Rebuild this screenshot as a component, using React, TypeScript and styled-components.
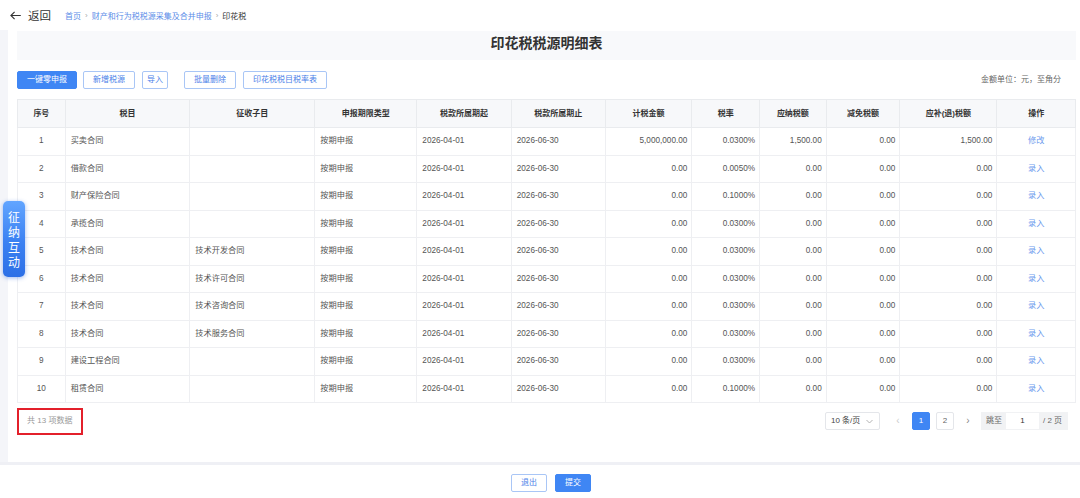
import React from "react";
import styled, { createGlobalStyle } from "styled-components";

const GlobalStyle = createGlobalStyle`
  html, body { margin: 0; padding: 0; background: #fff; }
  body { font-family: "Liberation Sans", "Noto Sans CJK SC", sans-serif; color: #555; }
  * { box-sizing: border-box; }
`;

const Page = styled.div`
  width: 1080px;
  height: 498px;
  position: relative;
  overflow: hidden;
  display: flex;
  flex-direction: column;
`;

const TopBar = styled.div`
  height: 30px;
  display: flex;
  align-items: center;
  padding-left: 10px;
`;

const Back = styled.div`
  display: flex;
  align-items: center;
  gap: 7px;
  font-size: 11.5px;
  color: #333;
`;

const Crumbs = styled.div`
  margin-left: 14px;
  display: flex;
  align-items: center;
  gap: 4px;
  font-size: 8px;
  color: #5b8de8;
`;

const CrumbSep = styled.span`
  color: #aaa;
  font-size: 8px;
`;

const CrumbCurrent = styled.span`
  color: #333;
`;

const Body = styled.div`
  height: 432px;
  display: flex;
`;

const LeftStrip = styled.div`
  width: 9px;
  background: #f4f5f9;
`;

const Main = styled.div`
  flex: 1;
  padding: 1px 4px 0 9px;
  display: flex;
  flex-direction: column;
`;

const TitleBand = styled.div`
  height: 29px;
  background: #f8f9fb;
  display: flex;
  align-items: center;
  justify-content: center;
  font-size: 14px;
  font-weight: bold;
  color: #333;
  padding-bottom: 8px;
`;

const Toolbar = styled.div`
  margin-top: 11px;
  height: 18px;
  display: flex;
  align-items: center;
`;

const Btn = styled.button<{ $primary?: boolean; $gap?: number; $pad?: number }>`
  height: 18px;
  padding: 0 ${(p) => p.$pad ?? 9}px;
  margin-left: ${(p) => p.$gap ?? 0}px;
  font-family: inherit;
  font-size: 8px;
  border-radius: 2px;
  border: 1px solid ${(p) => (p.$primary ? "#3f86f4" : "#a9c6f6")};
  background: ${(p) => (p.$primary ? "#3f86f4" : "#fff")};
  color: ${(p) => (p.$primary ? "#fff" : "#4a80e8")};
  line-height: 16px;
  cursor: pointer;
`;

const Unit = styled.div`
  margin-left: auto;
  margin-right: 15px;
  font-size: 8px;
  line-height: 12px;
  color: #666;
`;

const Table = styled.table`
  margin-top: 10px;
  width: 1058px;
  border-collapse: collapse;
  table-layout: fixed;
  font-size: 8.2px;
  line-height: 12px;
  border: 1px solid #e6e8ec;
`;

const Th = styled.th`
  height: 28px;
  background: #f7f8fa;
  color: #333;
  font-weight: bold;
  font-size: 8px;
  border: 1px solid #e9ebee;
  text-align: center;
  padding: 0;
`;

const Td = styled.td<{ $align?: "left" | "right" | "center" }>`
  height: 27.5px;
  border: 1px solid #eeeff2;
  text-align: ${(p) => p.$align ?? "left"};
  padding: 0 ${(p) => (p.$align === "right" ? "4px" : "5px")};
  color: #555;
  white-space: nowrap;
`;

const Link = styled.span`
  color: #6f9cee;
`;

const FooterRow = styled.div`
  margin-top: 5px;
  height: 26px;
  display: flex;
  align-items: center;
`;

const Total = styled.div`
  width: 66px;
  height: 27px;
  border: 2px solid #e3202b;
  display: flex;
  align-items: center;
  padding-left: 8px;
  font-size: 8px;
  line-height: 12px;
  color: #999;
`;

const Pager = styled.div`
  margin-left: auto;
  margin-right: 8px;
  display: flex;
  align-items: center;
  font-size: 8px;
  line-height: 12px;
  color: #555;
`;

const SizeSelect = styled.div`
  width: 55px;
  height: 18px;
  border: 1px solid #e4e6ea;
  border-radius: 2px;
  display: flex;
  align-items: center;
  padding: 0 6px 0 5px;
  justify-content: space-between;
  margin-right: 8px;
  color: #444;
`;

const Arrow = styled.span<{ $dim?: boolean }>`
  width: 20px;
  text-align: center;
  color: ${(p) => (p.$dim ? "#ccc" : "#888")};
  font-size: 10px;
`;

const PageBtn = styled.div<{ $active?: boolean; $gap?: number }>`
  width: 18px;
  height: 18px;
  border-radius: 2px;
  margin-left: ${(p) => p.$gap ?? 0}px;
  display: flex;
  align-items: center;
  justify-content: center;
  border: 1px solid ${(p) => (p.$active ? "#3f86f4" : "#e4e6ea")};
  background: ${(p) => (p.$active ? "#3f86f4" : "#fff")};
  color: ${(p) => (p.$active ? "#fff" : "#666")};
`;

const NextArrow = styled(Arrow)`
  margin-left: 4px;
`;

const Jump = styled.div`
  margin-left: 3px;
  width: 87px;
  height: 18px;
  background: #f1f2f4;
  display: flex;
  align-items: center;
  padding: 0 3px 0 5px;
  gap: 4px;
  color: #666;
`;

const JumpInput = styled.div`
  width: 33px;
  height: 16px;
  background: #fff;
  display: flex;
  align-items: center;
  justify-content: center;
  color: #333;
`;

const Bottom = styled.div`
  flex: 1;
  border-top: 3px solid #eff0f5;
  display: flex;
  justify-content: center;
  align-items: flex-start;
  padding-top: 9px;
  gap: 8px;
  padding-left: 22px;
`;

const SideTab = styled.div`
  position: absolute;
  left: 3px;
  top: 201px;
  width: 22px;
  height: 76px;
  border-radius: 5px;
  background: linear-gradient(180deg, #62a5ff 0%, #3a80f2 55%, #2c6fe6 100%);
  box-shadow: 0 1px 4px rgba(40, 100, 220, 0.45);
  color: #fff;
  font-size: 12px;
  font-family: "Noto Sans CJK SC", sans-serif;
  display: flex;
  flex-direction: column;
  align-items: center;
  justify-content: center;
  line-height: 15px;
`;

type Row = {
  name: string;
  sub: string;
  amount: string;
  rate: string;
  due: string;
  op: string;
};

const rows: Row[] = [
  { name: "买卖合同", sub: "", amount: "5,000,000.00", rate: "0.0300%", due: "1,500.00", op: "修改" },
  { name: "借款合同", sub: "", amount: "0.00", rate: "0.0050%", due: "0.00", op: "录入" },
  { name: "财产保险合同", sub: "", amount: "0.00", rate: "0.1000%", due: "0.00", op: "录入" },
  { name: "承揽合同", sub: "", amount: "0.00", rate: "0.0300%", due: "0.00", op: "录入" },
  { name: "技术合同", sub: "技术开发合同", amount: "0.00", rate: "0.0300%", due: "0.00", op: "录入" },
  { name: "技术合同", sub: "技术许可合同", amount: "0.00", rate: "0.0300%", due: "0.00", op: "录入" },
  { name: "技术合同", sub: "技术咨询合同", amount: "0.00", rate: "0.0300%", due: "0.00", op: "录入" },
  { name: "技术合同", sub: "技术服务合同", amount: "0.00", rate: "0.0300%", due: "0.00", op: "录入" },
  { name: "建设工程合同", sub: "", amount: "0.00", rate: "0.0300%", due: "0.00", op: "录入" },
  { name: "租赁合同", sub: "", amount: "0.00", rate: "0.1000%", due: "0.00", op: "录入" },
];

const widths = [47.6, 124.7, 125, 102, 94.4, 94, 86.6, 67.7, 66.7, 73.6, 97, 78.7];
const heads = ["序号", "税目", "征收子目", "申报期限类型", "税款所属期起", "税款所属期止", "计税金额", "税率", "应纳税额", "减免税额", "应补(退)税额", "操作"];

export default function App() {
  return (
    <Page>
      <GlobalStyle />
      <TopBar>
        <Back>
          <svg width="11" height="9" viewBox="0 0 11 9" fill="none" stroke="#333" strokeWidth="1.1">
            <path d="M10.8 4.5H1M4.6 0.8L0.9 4.5l3.7 3.7" />
          </svg>
          <span>返回</span>
        </Back>
        <Crumbs>
          <span>首页</span>
          <CrumbSep>›</CrumbSep>
          <span>财产和行为税税源采集及合并申报</span>
          <CrumbSep>›</CrumbSep>
          <CrumbCurrent>印花税</CrumbCurrent>
        </Crumbs>
      </TopBar>
      <Body>
        <LeftStrip />
        <Main>
          <TitleBand>印花税税源明细表</TitleBand>
          <Toolbar>
            <Btn $primary>一键零申报</Btn>
            <Btn $gap={6}>新增税源</Btn>
            <Btn $gap={7} $pad={4}>导入</Btn>
            <Btn $gap={16}>批量删除</Btn>
            <Btn $gap={7}>印花税税目税率表</Btn>
            <Unit>金额单位：元，至角分</Unit>
          </Toolbar>
          <Table>
            <colgroup>
              {widths.map((w, i) => (
                <col key={i} style={{ width: w }} />
              ))}
            </colgroup>
            <thead>
              <tr>
                {heads.map((h) => (
                  <Th key={h}>{h}</Th>
                ))}
              </tr>
            </thead>
            <tbody>
              {rows.map((r, i) => (
                <tr key={i}>
                  <Td $align="center">{i + 1}</Td>
                  <Td>{r.name}</Td>
                  <Td>{r.sub}</Td>
                  <Td>按期申报</Td>
                  <Td>2026-04-01</Td>
                  <Td>2026-06-30</Td>
                  <Td $align="right">{r.amount}</Td>
                  <Td $align="right">{r.rate}</Td>
                  <Td $align="right">{r.due}</Td>
                  <Td $align="right">0.00</Td>
                  <Td $align="right">{r.due}</Td>
                  <Td $align="center">
                    <Link>{r.op}</Link>
                  </Td>
                </tr>
              ))}
            </tbody>
          </Table>
          <FooterRow>
            <Total>共 13 项数据</Total>
            <Pager>
              <SizeSelect>
                <span>10 条/页</span>
                <svg width="7" height="5" viewBox="0 0 7 5" fill="none" stroke="#aaa" strokeWidth="0.9">
                  <path d="M0.5 1l3 3 3-3" />
                </svg>
              </SizeSelect>
              <Arrow $dim>‹</Arrow>
              <PageBtn $active $gap={4}>1</PageBtn>
              <PageBtn $gap={6}>2</PageBtn>
              <NextArrow>›</NextArrow>
              <Jump>
                <span>跳至</span>
                <JumpInput>1</JumpInput>
                <span>/ 2 页</span>
              </Jump>
            </Pager>
          </FooterRow>
        </Main>
      </Body>
      <Bottom>
        <Btn>退出</Btn>
        <Btn $primary>提交</Btn>
      </Bottom>
      <SideTab>
        <span>征</span>
        <span>纳</span>
        <span>互</span>
        <span>动</span>
      </SideTab>
    </Page>
  );
}
